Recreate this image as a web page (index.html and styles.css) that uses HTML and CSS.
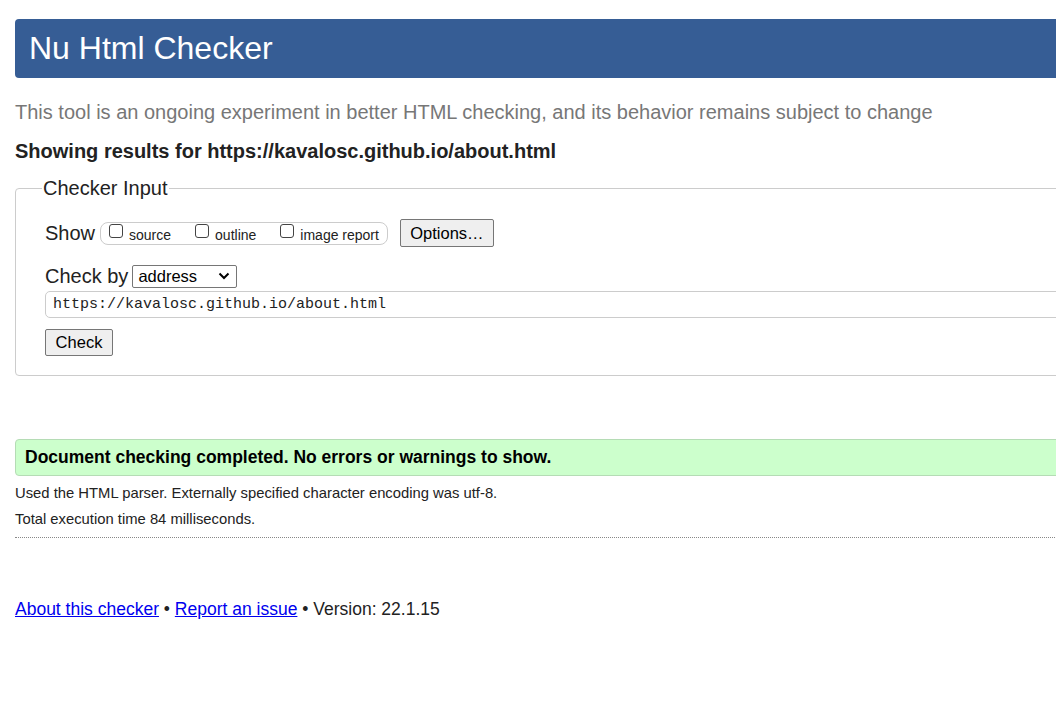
FILE: index.html
```html
<!DOCTYPE html>
<html lang="en">
<head>
<meta charset="utf-8">
<title>Nu Html Checker</title>
<link rel="stylesheet" href="styles.css">
</head>
<body>
<div class="page">
  <h1 class="banner">Nu Html Checker</h1>
  <p class="intro">This tool is an ongoing experiment in better HTML checking, and its behavior remains subject to change</p>
  <p class="showing">Showing results for https://kavalosc.github.io/about.html</p>
  <fieldset class="checker">
    <legend>Checker Input</legend>
    <div class="row show-row">
      <span class="label">Show</span>
      <span class="opts">
        <label class="opt"><span class="cb"></span>source</label>
        <label class="opt"><span class="cb"></span>outline</label>
        <label class="opt"><span class="cb"></span>image report</label>
      </span>
      <span class="btn options">Options…</span>
    </div>
    <div class="row by-row">
      <span class="label">Check by</span>
      <span class="select">address<svg class="chev" width="12" height="8" viewBox="0 0 12 8"><path d="M1.5 1.5 L6 6 L10.5 1.5" fill="none" stroke="#000" stroke-width="2"/></svg></span>
    </div>
    <div class="url">https://kavalosc.github.io/about.html</div>
    <span class="btn check">Check</span>
  </fieldset>
  <p class="success">Document checking completed. No errors or warnings to show.</p>
  <p class="meta">Used the HTML parser. Externally specified character encoding was utf-8.</p>
  <p class="meta">Total execution time 84 milliseconds.</p>
  <hr class="sep">
  <p class="footer"><a href="#">About this checker</a> • <a href="#">Report an issue</a> • Version: 22.1.15</p>
</div>
</body>
</html>
```
FILE: styles.css
```css
html { overflow: hidden; }
body {
  margin: 0;
  font-family: "Liberation Sans", Arial, sans-serif;
  color: #222;
  background: #fff;
}
.page {
  width: 1180px;
  padding: 19px 0 0 15px;
}
.banner {
  margin: 0;
  height: 59px;
  box-sizing: border-box;
  padding: 0 14px;
  display: flex;
  align-items: center;
  background: #365d95;
  color: #fff;
  font-weight: normal;
  font-size: 32px;
  border-radius: 4px;
}
.intro {
  margin: 22px 0 0;
  font-size: 20px;
  line-height: 24px;
  color: #777;
}
.showing {
  margin: 15px 0 0;
  font-size: 20px;
  line-height: 24px;
  font-weight: bold;
  color: #222;
}
.checker {
  margin: 14px 0 0;
  border: 1px solid #ccc;
  border-radius: 4px;
  padding: 6px 0 19px 29px;
  min-width: 0;
}
.checker legend {
  font-size: 20px;
  padding: 0 1px;
  margin-left: -3px;
  color: #222;
}
.row {
  display: flex;
  align-items: center;
}
.label {
  font-size: 20px;
  color: #222;
}
.show-row { height: 28px; margin-top: 13px; }
.opts {
  margin-left: 5px;
  display: flex;
  align-items: center;
  height: 23px;
  box-sizing: border-box;
  border: 1px solid #ccc;
  border-radius: 8px;
  padding: 0 8px 0 8px;
  gap: 24px;
}
.opt {
  font-size: 14px;
  display: flex;
  align-items: center;
  color: #222;
  padding-top: 3px;
}
.cb {
  width: 14px;
  height: 14px;
  box-sizing: border-box;
  border: 1px solid #444;
  border-radius: 3px;
  margin-right: 6px;
  margin-top: -7px;
}
.btn {
  display: inline-flex;
  align-items: center;
  justify-content: center;
  box-sizing: border-box;
  border: 1px solid #767676;
  background: #efefef;
  border-radius: 2px;
  font-size: 16.5px;
  color: #000;
}
.options {
  margin-left: 12px;
  width: 94px;
  height: 28px;
}
.by-row { margin-top: 17px; height: 24px; }
.select {
  margin-left: 4px;
  width: 105px;
  height: 23px;
  box-sizing: border-box;
  border: 1px solid #767676;
  border-radius: 2px;
  font-size: 16.5px;
  color: #000;
  display: flex;
  align-items: center;
  justify-content: space-between;
  padding: 0 6px 0 5px;
}
.url {
  margin-top: 3px;
  height: 27px;
  box-sizing: border-box;
  border: 1px solid #ccc;
  border-radius: 5px;
  font-family: "Liberation Mono", "DejaVu Sans Mono", monospace;
  font-size: 15px;
  color: #222;
  display: flex;
  align-items: center;
  padding-left: 7px;
}
.check {
  margin-top: 11px;
  width: 68px;
  height: 27px;
}
.success {
  margin: 63px 0 0;
  height: 37px;
  box-sizing: border-box;
  border: 1px solid #b5dcb5;
  border-radius: 4px;
  background: #ccffcc;
  font-weight: bold;
  font-size: 17.5px;
  color: #000;
  display: flex;
  align-items: center;
  padding-left: 9px;
}
.meta {
  margin: 9px 0 0;
  font-size: 14.8px;
  line-height: 17px;
  color: #222;
}
.meta + .meta { margin-top: 9px; }
.sep {
  margin: 9px 0 0;
  border: 0;
  border-top: 1px dotted #888;
}
.footer {
  margin: 61px 0 0;
  font-size: 17.5px;
  color: #222;
}
.footer a { color: #0000ee; }
```
